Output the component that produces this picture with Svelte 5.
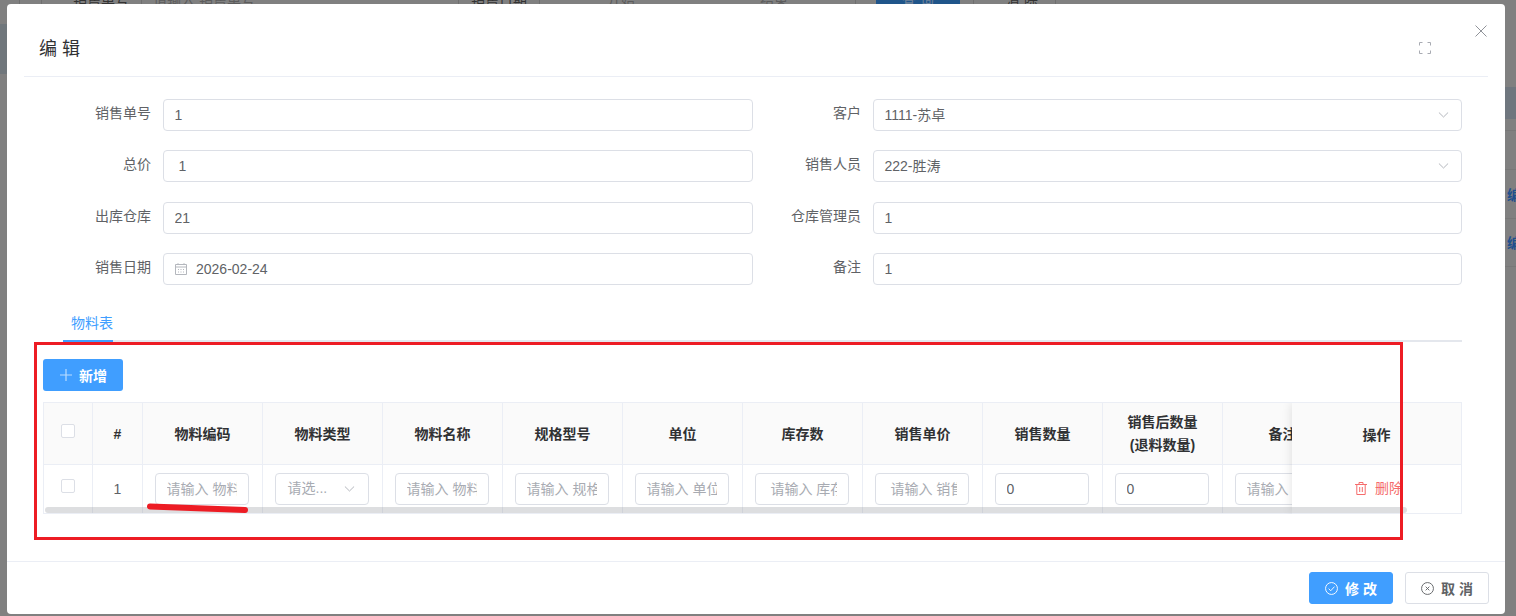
<script>
  const leftFields = [
    { label: '销售单号', value: '1' },
    { label: '总价', value: ' 1' },
    { label: '出库仓库', value: '21' },
    { label: '销售日期', value: '2026-02-24', date: true }
  ];
  const rightFields = [
    { label: '客户', value: '1111-苏卓', select: true },
    { label: '销售人员', value: '222-胜涛', select: true },
    { label: '仓库管理员', value: '1' },
    { label: '备注', value: '1' }
  ];
  const rows = leftFields.map((f, i) => [f, rightFields[i]]).flat();

  const columns = [
    { title: '物料编码', placeholder: '请输入 物料编码' },
    { title: '物料类型', select: true },
    { title: '物料名称', placeholder: '请输入 物料名称' },
    { title: '规格型号', placeholder: '请输入 规格型号' },
    { title: '单位', placeholder: '请输入 单位' },
    { title: '库存数', placeholder: ' 请输入 库存数' },
    { title: '销售单价', placeholder: ' 请输入 销售单价' },
    { title: '销售数量', value: '0' },
    { title: '销售后数量', sub: '(退料数量)', value: '0' },
    { title: '备注', placeholder: '请输入 备注' }
  ];
</script>

<div class="under">
  <div class="search">
    <span class="s-line l1"></span>
    <span class="s-line l2"></span>
    <span class="s-label t1">销售单号</span>
    <span class="s-line l3"></span>
    <span class="s-ph t2">请输入 销售单号</span>
    <span class="s-line l4"></span>
    <span class="s-label t3">销售日期</span>
    <span class="s-line l5"></span>
    <span class="s-ph t4">开始</span>
    <span class="s-ph t5">结束</span>
    <span class="s-line l6"></span>
    <span class="s-btn">查 询</span>
    <span class="s-line l7"></span>
    <span class="s-label t6">清 除</span>
    <span class="s-line l8"></span>
  </div>
  <div class="band-left"></div>
  <div class="under-table">
    <div class="u-head"></div>
    <div class="u-row r1"></div>
    <div class="u-row r2"></div>
    <div class="u-row r3"><span>编辑</span></div>
    <div class="u-row r4"><span>编辑</span></div>
  </div>
</div>

<div class="overlay">
  <div class="modal">
    <header class="head">
      <h2>编 辑</h2>
      <svg class="full" viewBox="0 0 12 12" width="12" height="12" fill="none" stroke="#a8abb2" stroke-width="1">
        <path d="M.5 3.5v-3h3M8.5.5h3v3M11.5 8.5v3h-3M3.5 11.5h-3v-3" />
      </svg>
      <svg class="close" viewBox="0 0 12 12" width="12" height="12" fill="none" stroke="#909399" stroke-width="1">
        <path d="M.5.5l11 11M11.5.5l-11 11" />
      </svg>
    </header>

    <div class="body">
      <div class="form">
        {#each rows as f}
          <div class="field">
            <span class="label">{f.label}</span>
            {#if f.select}
              <div class="box select">
                <span class="val">{f.value}</span>
                <svg class="chev" viewBox="0 0 10 6" width="11" height="6" fill="none" stroke="#b4b7bd" stroke-width="1"><path d="M.4.5L5 5l4.6-4.5" /></svg>
              </div>
            {:else if f.date}
              <div class="box date">
                <svg viewBox="0 0 12 12" width="12" height="12" fill="none" stroke="#b4b7bd" stroke-width="1">
                  <path d="M.5 1.5h11v10H.5zM.5 4h11M3 .2v1.6M9 .2v1.6M3 6.5h1M5.5 6.5h1M8 6.5h1M3 9h1M5.5 9h1M8 9h1" />
                </svg>
                <span class="val">{f.value}</span>
              </div>
            {:else}
              <input class="box" value={f.value} />
            {/if}
          </div>
        {/each}
      </div>

      <div class="tabs"><span class="tab">物料表</span></div>

      <button class="add">
        <svg viewBox="0 0 12 12" width="12" height="12" fill="none" stroke="#b9dcff" stroke-width="1.2"><path d="M6 0v12M0 6h12" /></svg>
        新增
      </button>

      <div class="table-wrap">
        <table>
          <colgroup>
            <col class="c-small" /><col class="c-small" />
            {#each columns as _}<col class="c-main" />{/each}
            <col class="c-op" />
          </colgroup>
          <thead>
            <tr>
              <th class="first"><span class="check"></span></th>
              <th>#</th>
              {#each columns as c}
                <th>{c.title}{#if c.sub}<br />{c.sub}{/if}</th>
              {/each}
              <th></th>
            </tr>
          </thead>
          <tbody>
            <tr>
              <td class="first center"><span class="check"></span></td>
              <td class="center num">1</td>
              {#each columns as c}
                <td>
                  {#if c.select}
                    <div class="cell-select">
                      <span class="val">请选...</span>
                      <svg viewBox="0 0 10 6" width="11" height="6" fill="none" stroke="#b4b7bd" stroke-width="1"><path d="M.4.5L5 5l4.6-4.5" /></svg>
                    </div>
                  {:else}
                    <input class="cell-input" placeholder={c.placeholder} value={c.value ?? ''} />
                  {/if}
                </td>
              {/each}
              <td></td>
            </tr>
          </tbody>
        </table>

        <div class="fixed">
          <div class="fixed-head">操作</div>
          <div class="fixed-cell">
            <svg viewBox="0 0 12 13" width="12" height="13" fill="none" stroke="#f56c6c" stroke-width="1">
              <path d="M0 2.5h12M4 2.5V.5h4v2M1.8 2.5v10h8.4v-10M4.7 5v5M7.3 5v5" />
            </svg>
            <span class="val">删除</span>
          </div>
        </div>
        <div class="scrollbar"></div>
      </div>
    </div>

    <footer class="foot">
      <button class="btn primary">
        <svg viewBox="0 0 14 14" width="13" height="13" fill="none" stroke="#fff" stroke-width="1">
          <circle cx="7" cy="7" r="6.4" /><path d="M4 7.2l2.2 2.2L10.2 5" />
        </svg>
        修 改
      </button>
      <button class="btn">
        <svg viewBox="0 0 14 14" width="13" height="13" fill="none" stroke="#606266" stroke-width="1">
          <circle cx="7" cy="7" r="6.4" /><path d="M5 5l4 4M9 5l-4 4" />
        </svg>
        取 消
      </button>
    </footer>
  </div>
</div>

<svg class="marks" width="1516" height="616" viewBox="0 0 1516 616" fill="none" stroke="#ed1c24">
  <rect x="35.5" y="343.5" width="1366" height="195" stroke-width="3" />
  <path d="M150 506.5L245 510" stroke-width="6" stroke-linecap="round" />
</svg>

<style>
  :global(body) {
    margin: 0;
    background: #808080;
    overflow: hidden;
  }

  .under,
  .overlay,
  .marks {
    position: absolute;
    top: 0;
    left: 0;
    width: 1516px;
    height: 616px;
  }

  .under {
    overflow: hidden;
    font-family: "Liberation Sans", "Noto Sans CJK SC", sans-serif;
    font-size: 14px;
  }

  .search {
    position: absolute;
    top: -9px;
    left: 0;
    width: 100%;
    height: 18px;
    line-height: 18px;
  }
  .search > span {
    position: absolute;
    white-space: nowrap;
  }
  .s-line {
    top: 0;
    width: 1px;
    height: 18px;
    background: #6f6f6f;
  }
  .l1 { left: 19px; }
  .l2 { left: 41px; }
  .l3 { left: 141px; }
  .l4 { left: 458px; }
  .l5 { left: 539px; }
  .l6 { left: 855px; }
  .l7 { left: 973px; }
  .l8 { left: 1055px; }
  .s-label { color: #333; }
  .s-ph { color: #5c5c5c; }
  .t1 { left: 73px; }
  .t2 { left: 153px; }
  .t3 { left: 471px; }
  .t4 { left: 607px; }
  .t5 { left: 760px; }
  .t6 { left: 1006px; }
  .s-btn {
    left: 876px;
    width: 84px;
    text-align: center;
    background: #20558a;
    color: #6f8299;
  }

  .band-left {
    position: absolute;
    top: 24px;
    left: 0;
    width: 8px;
    height: 50px;
    background: #70777c;
  }

  .under-table {
    padding: 87px 0 0 1500px;
  }
  .u-head {
    height: 32px;
    background: #6f767e;
  }
  .u-row {
    box-sizing: border-box;
    border-bottom: 1px solid #787878;
    padding-left: 7px;
    white-space: nowrap;
    overflow: hidden;
    color: #204f8d;
    font-weight: 700;
  }
  .r1 { height: 12px; }
  .r2 { height: 39px; }
  .r3 { height: 49px; padding-top: 14px; }
  .r4 { height: 48px; padding-top: 13px; }

  .overlay {
    box-sizing: border-box;
    padding: 4px 11px 2px 7px;
    font-family: "Liberation Sans", "Noto Sans CJK SC", sans-serif;
    font-size: 14px;
    color: #606266;
  }

  .modal {
    height: 100%;
    display: flex;
    flex-direction: column;
    background: #fff;
    border-radius: 4px;
  }

  .head {
    flex: none;
    position: relative;
    box-sizing: border-box;
    height: 73px;
    margin: 0 17px 0 17px;
    padding: 32px 0 0 15px;
    border-bottom: 1px solid #ebeef5;
  }
  .head h2 {
    margin: 0;
    font-size: 18px;
    font-weight: 400;
    line-height: 26px;
    color: #303133;
  }
  .full {
    position: absolute;
    top: 38px;
    right: 57px;
  }
  .close {
    position: absolute;
    top: 21px;
    right: 1px;
  }

  .body {
    flex: 1;
    min-height: 0;
    padding: 22px 43px 0 36px;
  }

  .form {
    margin-left: 20px;
    display: grid;
    grid-template-columns: 690px 689px;
    column-gap: 20px;
    row-gap: 19.33px;
  }
  .field {
    display: flex;
    align-items: center;
  }
  .label {
    flex: none;
    width: 88px;
    padding: 0 12px 4px 0;
    text-align: right;
    white-space: nowrap;
    line-height: 20px;
  }
  .val {
    line-height: 20px;
    margin-top: -1px;
  }
  .box {
    flex: 1;
    min-width: 0;
    box-sizing: border-box;
    height: 32px;
    margin: 0;
    padding: 0 11px 0 10.5px;
    display: flex;
    align-items: center;
    gap: 9px;
    border: 1px solid #dcdfe6;
    border-radius: 4px;
    background: #fff;
    color: #606266;
    font: inherit;
    outline: none;
    white-space: pre;
  }
  .date {
    padding-left: 11px;
  }
  .date .val {
    margin-top: 0;
  }
  .select {
    justify-content: space-between;
    padding-right: 12px;
  }

  .tabs {
    box-sizing: border-box;
    height: 40px;
    margin: 17px 0 0 20px;
    border-bottom: 2px solid #e4e7ed;
  }
  .tab {
    display: inline-block;
    box-sizing: border-box;
    height: 40px;
    padding-left: 8px;
    width: 50px;
    line-height: 42px;
    color: #409eff;
    border-bottom: 2px solid #409eff;
  }

  .add {
    display: flex;
    align-items: center;
    gap: 7px;
    width: 80px;
    height: 32px;
    margin: 17px 0 11px;
    padding: 0 0 0 17px;
    border: none;
    border-radius: 3px;
    background: #409eff;
    color: #fff;
    font: inherit;
    font-weight: 700;
  }

  .table-wrap {
    position: relative;
    box-sizing: border-box;
    height: 112px;
    overflow: hidden;
    border-top: 1px solid #ebeef5;
    border-right: 1px solid #ebeef5;
  }
  table {
    table-layout: fixed;
    width: 1470px;
    border-collapse: separate;
    border-spacing: 0;
  }
  .c-small { width: 50px; }
  .c-main { width: 120px; }
  .c-op { width: 170px; }

  th,
  td {
    box-sizing: border-box;
    padding: 0;
    border-right: 1px solid #ebeef5;
    border-bottom: 1px solid #ebeef5;
  }
  th {
    height: 62px;
    padding-top: 2px;
    background: #fafafa;
    color: #303133;
    font-weight: 700;
    line-height: 23px;
    text-align: center;
  }
  td {
    height: 49px;
    padding: 0 0 0 12px;
  }
  .first { border-left: 1px solid #ebeef5; }
  td.center { padding: 0; text-align: center; }
  .num { color: #606266; }

  .check {
    display: inline-block;
    box-sizing: border-box;
    width: 14px;
    height: 14px;
    margin-bottom: 6px;
    border: 1px solid #dcdfe6;
    border-radius: 2px;
    background: #fff;
    vertical-align: middle;
  }
  th .check {
    margin-bottom: 8px;
  }

  .cell-input,
  .cell-select {
    box-sizing: border-box;
    display: flex;
    align-items: center;
    width: 94px;
    height: 32px;
    margin: 0;
    padding: 0 11px 0 10.5px;
    border: 1px solid #dcdfe6;
    border-radius: 4px;
    background: #fff;
    color: #606266;
    font: inherit;
    outline: none;
  }
  .cell-input::placeholder {
    color: #a8abb2;
    opacity: 1;
  }
  .cell-select {
    justify-content: space-between;
    padding-left: 11.5px;
    padding-right: 13px;
    color: #a8abb2;
  }

  .fixed {
    position: absolute;
    top: 0;
    right: 0;
    bottom: 0;
    width: 169px;
    background: #fff;
    box-shadow: 0 0 10px rgba(0, 0, 0, 0.12);
  }
  .fixed-head {
    box-sizing: border-box;
    height: 62px;
    padding-top: 1px;
    display: flex;
    align-items: center;
    justify-content: center;
    background: #fafafa;
    color: #303133;
    font-weight: 700;
    border-bottom: 1px solid #ebeef5;
  }
  .fixed-cell {
    box-sizing: border-box;
    height: 49px;
    padding-left: 63px;
    display: flex;
    align-items: center;
    gap: 8px;
    color: #f56c6c;
    border-bottom: 1px solid #ebeef5;
  }

  .scrollbar {
    position: absolute;
    left: 2px;
    bottom: 1px;
    width: 1362px;
    height: 6px;
    border-radius: 3px;
    background: rgba(144, 147, 153, 0.3);
  }

  .foot {
    flex: none;
    box-sizing: border-box;
    height: 53px;
    display: flex;
    justify-content: flex-end;
    gap: 12px;
    padding: 10px 16px 0 0;
    border-top: 1px solid #ebeef5;
  }
  .btn {
    display: flex;
    align-items: center;
    justify-content: center;
    gap: 7px;
    box-sizing: border-box;
    width: 84px;
    height: 32px;
    padding: 0;
    border: 1px solid #dcdfe6;
    border-radius: 3px;
    background: #fff;
    color: #606266;
    font: inherit;
    font-weight: 700;
  }
  .primary {
    border-color: #409eff;
    background: #409eff;
    color: #fff;
  }

  .marks {
    pointer-events: none;
  }
</style>
